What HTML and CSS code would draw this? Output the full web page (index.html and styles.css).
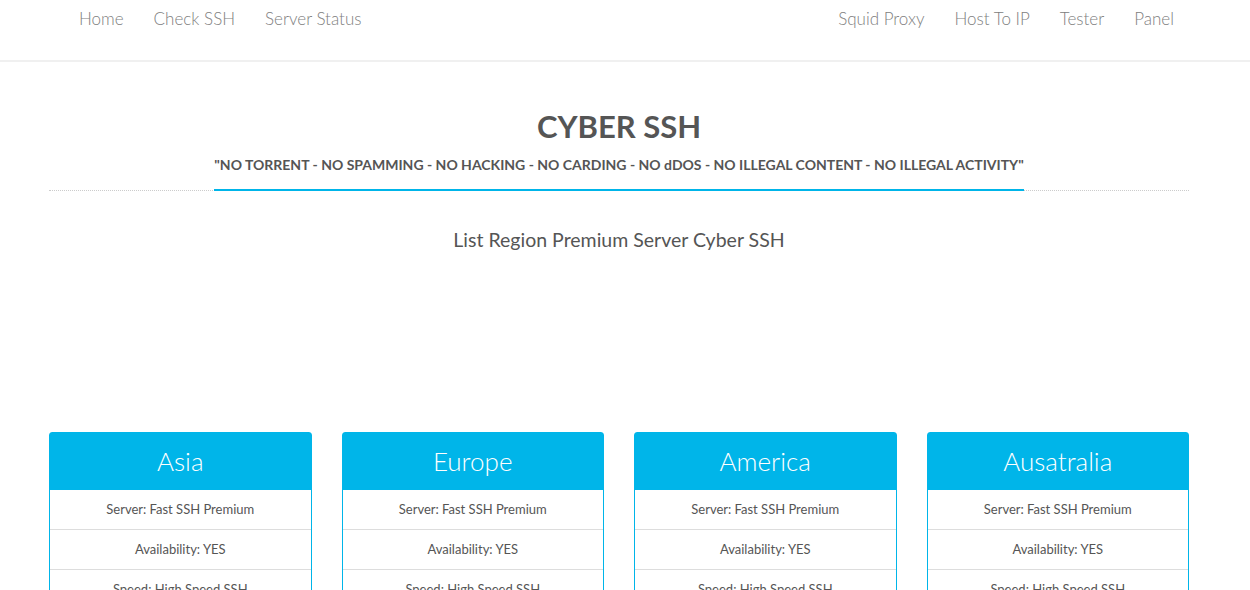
FILE: index.html
```html
<!DOCTYPE html>
<html lang="en">
  <head>
    <meta charset="UTF-8" />
    <meta name="viewport" content="width=device-width, initial-scale=1.0" />
    <title>Cyber SSH</title>
    <link rel="stylesheet" href="styles.css">
  </head>
  <body>
    <header class="navbar">
      <nav class="nav-inner">
        <ul class="nav-list nav-left">
          <li><a href="#">Home</a></li>
          <li><a href="#">Check SSH</a></li>
          <li><a href="#">Server Status</a></li>
        </ul>
        <ul class="nav-list nav-right">
          <li><a href="#">Squid Proxy</a></li>
          <li><a href="#">Host To IP</a></li>
          <li><a href="#">Tester</a></li>
          <li><a href="#">Panel</a></li>
        </ul>
      </nav>
    </header>

    <main class="page">
      <div class="container">
        <div class="heading">
          <h1 class="site-title">CYBER SSH</h1>
          <p class="rules">"NO TORRENT - NO SPAMMING - NO HACKING - NO CARDING - NO dDOS - NO ILLEGAL CONTENT - NO ILLEGAL ACTIVITY"</p>
        </div>
        <h2 class="lead">List Region Premium Server Cyber SSH</h2>

        <div class="regions">
          <div class="region">
            <div class="region-head">Asia</div>
            <ul class="region-rows">
              <li>Server: Fast SSH Premium</li>
              <li>Availability: YES</li>
              <li>Speed: High Speed SSH</li>
              <li>Active: 30 Days</li>
            </ul>
          </div>
          <div class="region">
            <div class="region-head">Europe</div>
            <ul class="region-rows">
              <li>Server: Fast SSH Premium</li>
              <li>Availability: YES</li>
              <li>Speed: High Speed SSH</li>
              <li>Active: 30 Days</li>
            </ul>
          </div>
          <div class="region">
            <div class="region-head">America</div>
            <ul class="region-rows">
              <li>Server: Fast SSH Premium</li>
              <li>Availability: YES</li>
              <li>Speed: High Speed SSH</li>
              <li>Active: 30 Days</li>
            </ul>
          </div>
          <div class="region">
            <div class="region-head">Ausatralia</div>
            <ul class="region-rows">
              <li>Server: Fast SSH Premium</li>
              <li>Availability: YES</li>
              <li>Speed: High Speed SSH</li>
              <li>Active: 30 Days</li>
            </ul>
          </div>
        </div>
      </div>
    </main>
  </body>
</html>
```

FILE: styles.css
```css
html, body {
  margin: 0;
  padding: 0;
  box-sizing: border-box;
}
*, *::before, *::after {
  box-sizing: inherit;
}
body {
  background: #fff;
  color: #555;
  font-family: 'Lato', 'Open Sans', sans-serif;
}

/* top bar */
.navbar {
  height: 62px;
  border-bottom: 2px solid #f0f0f0;
  padding-right: 12px;
}
.nav-inner {
  width: 1140px;
  margin: 0 auto;
  display: flex;
  justify-content: space-between;
}
.nav-list {
  list-style: none;
  margin: 0;
  padding: 0;
  display: flex;
}
.nav-left {
  padding-left: 15px;
}
.nav-list a {
  display: block;
  padding: 9px 15px;
  line-height: 20px;
  font-size: 17px;
  font-weight: 300;
  color: #808080;
  text-decoration: none;
}

/* content */
.page {
  padding-right: 12px;
}
.container {
  width: 1140px;
  margin: 0 auto;
}
.heading {
  text-align: center;
  border-bottom: 1px dotted #ccc;
  padding-top: 46px;
}
.site-title {
  margin: 0;
  font-size: 31px;
  line-height: 36px;
  font-weight: 700;
  color: #555;
}
.rules {
  display: inline-block;
  margin: 12px 0 -1px;
  padding-bottom: 15px;
  font-size: 14px;
  line-height: 18px;
  font-weight: 700;
  color: #555;
  border-bottom: 2px solid #00b5e9;
}
.lead {
  margin: 37px 0 0;
  text-align: center;
  font-size: 19.5px;
  line-height: 24px;
  font-weight: 400;
  color: #555;
}

/* region cards */
.regions {
  display: grid;
  grid-template-columns: repeat(4, 1fr);
  gap: 30px;
  margin-top: 180px;
}
.region {
  border: 1px solid #00b5e9;
  border-radius: 3px 3px 0 0;
  background: #fff;
}
.region-head {
  background: #00b5e9;
  color: #fff;
  height: 57px;
  line-height: 56px;
  text-align: center;
  font-size: 26px;
  font-weight: 300;
}
.region-rows {
  list-style: none;
  margin: 0;
  padding: 0;
}
.region-rows li {
  height: 40px;
  line-height: 39px;
  border-bottom: 1px solid #ddd;
  text-align: center;
  font-size: 13px;
  color: #555;
}
```
